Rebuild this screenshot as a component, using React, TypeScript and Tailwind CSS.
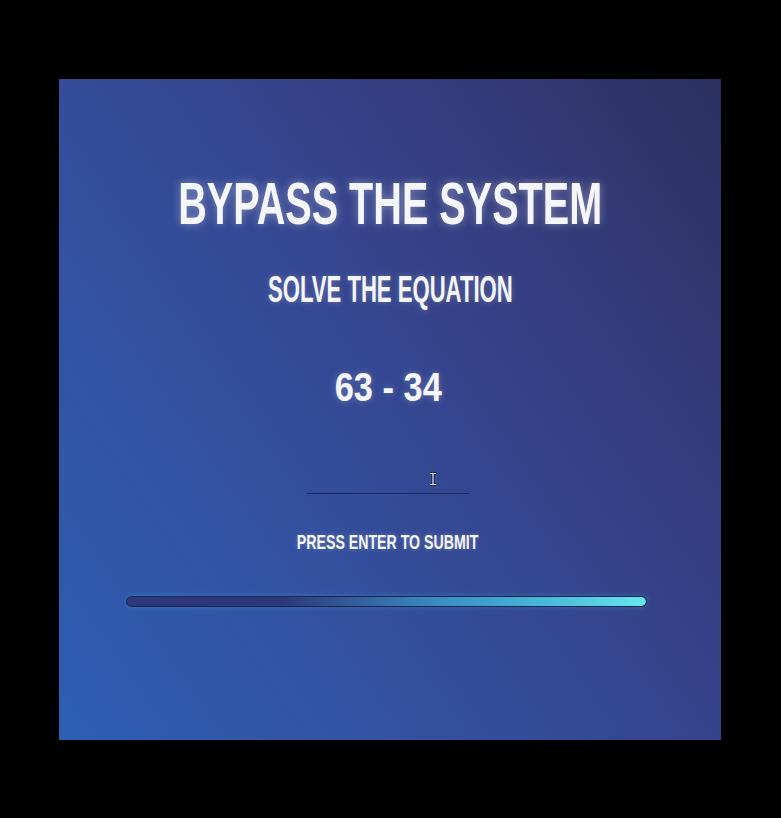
import React from "react";

export default function App() {
  const font = { fontFamily: '"Liberation Sans", Arial, sans-serif' };
  return (
    <div className="w-[781px] h-[818px] bg-black pt-[79px] pl-[59px]" style={font}>
      <div className="w-[662px] h-[661px] flex flex-col items-center bg-[linear-gradient(55deg,#2d5fb2_0%,#3352a2_30%,#35458f_55%,#343c7c_75%,#2b3060_100%)] text-[#f5f6fa]">
        <div className="mt-[95px] h-[60px] leading-none text-[60px] font-bold whitespace-nowrap scale-x-[0.66] [text-shadow:0_0_12px_rgba(255,255,255,0.4)]">
          BYPASS THE SYSTEM
        </div>
        <div className="mt-[38px] h-[36px] leading-none text-[36px] font-bold whitespace-nowrap scale-x-[0.614] [text-shadow:0_0_8px_rgba(255,255,255,0.25)]">
          SOLVE THE EQUATION
        </div>
        <div className="mt-[59px] h-[40px] leading-none text-[40px] font-bold whitespace-nowrap scale-x-[0.86] -translate-x-[2px] [text-shadow:0_0_8px_rgba(255,255,255,0.25)]">
          63 - 34
        </div>
        <div className="relative mt-[57px] w-[162px] h-[30px] border-b border-[#1d2862] -translate-x-[2px]">
          <svg className="absolute left-[122px] top-[8px]" width="8" height="14" viewBox="0 0 8 14">
            <path d="M1 1.5h6M1 12.5h6M4 1.5v11" stroke="#1b2250" strokeWidth="3" fill="none" />
            <path d="M1 1.5h6M1 12.5h6M4 1.5v11" stroke="#e8ecf4" strokeWidth="1.2" fill="none" />
          </svg>
        </div>
        <div className="mt-[37px] h-[21px] leading-none text-[21px] font-bold whitespace-nowrap scale-x-[0.674] -translate-x-[2px] [text-shadow:0_0_6px_rgba(255,255,255,0.25)]">
          PRESS ENTER TO SUBMIT
        </div>
        <div className="self-start ml-[67px] mt-[44px] w-[521px] h-[11px] rounded-full border border-[#1b2454] bg-[#2d3878] shadow-[0_0_6px_rgba(80,220,235,0.25)] overflow-hidden">
          <div className="w-full h-full rounded-full bg-[linear-gradient(90deg,rgba(60,140,200,0)_0%,rgba(60,140,200,0)_30%,#3b8cc4_60%,#47b8d8_80%,#66e6ee_100%)]" />
        </div>
      </div>
    </div>
  );
}
